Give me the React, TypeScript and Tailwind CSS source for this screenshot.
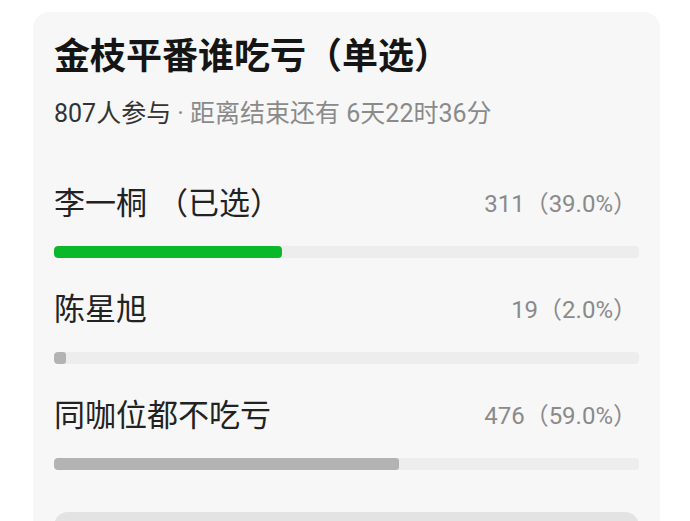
const options = [
  { name: '李一桐', picked: true, votes: 311, pct: 39 },
  { name: '陈星旭', picked: false, votes: 19, pct: 2 },
  { name: '同咖位都不吃亏', picked: false, votes: 476, pct: 59 },
];

function OptionRow({ name, picked, votes, pct, first }: { name: string; picked: boolean; votes: number; pct: number; first: boolean }) {
  return (
    <div className={first ? 'mt-[54px]' : 'mt-[32px]'}>
      <div className="flex items-center justify-between h-[40px] pr-[2px]">
        <span className="text-[31px] leading-[40px] text-[#222]">
          {name}
          {picked && <span className="ml-[10px]">（已选）</span>}
        </span>
        <span className="text-[24px] text-[#8a8a8a]">
          {votes}（{pct.toFixed(1)}%）
        </span>
      </div>
      <div className="mt-[22px] h-[12px] rounded-[4px] bg-[#ededed] overflow-hidden">
        <div
          className={picked ? 'h-full rounded-[4px] bg-[#0bb82a]' : 'h-full rounded-[3px] bg-[#b3b3b3]'}
          style={{ width: `${pct}%` }}
        />
      </div>
    </div>
  );
}

export default function App() {
  return (
    <div className="w-[690px] h-[521px] overflow-hidden bg-white pt-[12px] font-['Roboto','Noto_Sans_CJK_SC',sans-serif]">
      <div className="ml-[33px] w-[627px] rounded-[16px] bg-[#f7f7f7] pt-[23px] px-[21px] pb-[20px]">
        <h1 className="text-[36px] leading-[44px] font-bold text-[#151515]">金枝平番谁吃亏（单选）</h1>
        <p className="mt-[19px] text-[25px] leading-[32px] text-[#8a8a8a]">
          <span className="text-[#333]">807人参与</span> · 距离结束还有 6天22时36分
        </p>

        {options.map((o, i) => (
          <OptionRow key={o.name} first={i === 0} {...o} />
        ))}

        <button className="mt-[42px] w-full h-[56px] rounded-[14px] bg-[#e3e3e3]" />
      </div>
    </div>
  );
}
